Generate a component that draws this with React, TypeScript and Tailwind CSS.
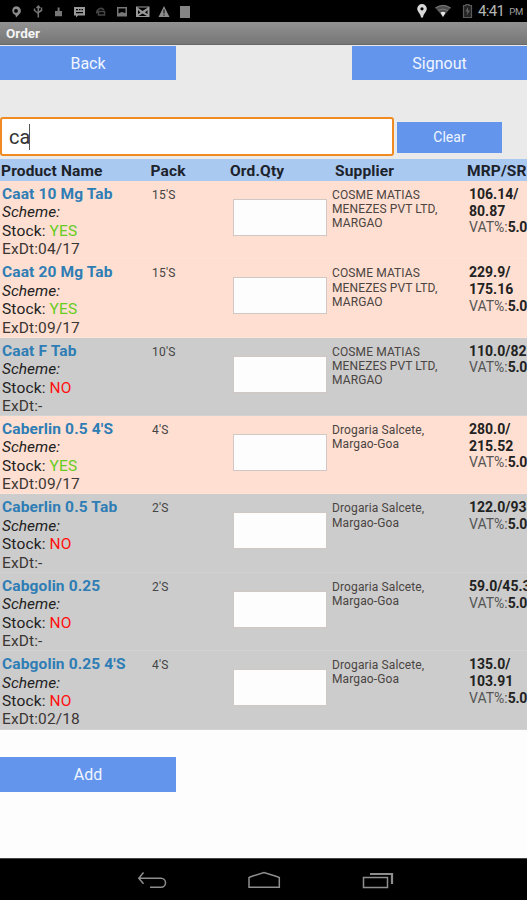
import React, { useState } from 'react';

interface Product {
  name: string;
  inStock: boolean;
  expiry: string;
  pack: string;
  supplier: string[];
  price: string[];
}

const COSME = ['COSME MATIAS', 'MENEZES PVT LTD,', 'MARGAO'];
const DROGARIA = ['Drogaria Salcete,', 'Margao-Goa'];

const products: Product[] = [
  { name: 'Caat 10 Mg Tab', inStock: true, expiry: '04/17', pack: "15'S", supplier: COSME, price: ['106.14/', '80.87'] },
  { name: 'Caat 20 Mg Tab', inStock: true, expiry: '09/17', pack: "15'S", supplier: COSME, price: ['229.9/', '175.16'] },
  { name: 'Caat F Tab', inStock: false, expiry: '-', pack: "10'S", supplier: COSME, price: ['110.0/82'] },
  { name: "Caberlin 0.5 4'S", inStock: true, expiry: '09/17', pack: "4'S", supplier: DROGARIA, price: ['280.0/', '215.52'] },
  { name: 'Caberlin 0.5 Tab', inStock: false, expiry: '-', pack: "2'S", supplier: DROGARIA, price: ['122.0/93'] },
  { name: 'Cabgolin 0.25', inStock: false, expiry: '-', pack: "2'S", supplier: DROGARIA, price: ['59.0/45.3'] },
  { name: "Cabgolin 0.25 4'S", inStock: false, expiry: '02/18', pack: "4'S", supplier: DROGARIA, price: ['135.0/', '103.91'] },
];

const StatusBar = () => (
  <div className="h-[22px] shrink-0 bg-black flex items-center justify-between">
    <svg width="200" height="22" viewBox="0 0 200 22" fill="#8c8c8c">
      {/* location */}
      <path fillRule="evenodd" d="M16 6.200a4.900 4.600 0 0 1 3 8.200L16 17.500l-.6-2.600a4.500 4.500 0 0 1 .6-8.700zm0 2.800a1.900 1.900 0 1 0 0 3.800 1.900 1.900 0 0 0 0-3.800z" />
      {/* usb */}
      <g fill="none" stroke="#777" strokeWidth="1.500">
        <path d="M38.300 6v11.500M34.500 8.500v2l3.800 3M41.500 7.500v3l-3.200 2" />
        <path d="M36.500 8l1.800-2 1.800 2" />
      </g>
      {/* debugging */}
      <path d="M57.600 7.500h2V11H62v5.300h-7V11h2.600z" fill="#777" />
      {/* message */}
      <path fillRule="evenodd" d="M74 7h11v8.500h-7l-2 2v-2h-2zM76 9v1.200h2V9zM79 9v1.200h1.500V9zM81.500 9v1.200H83V9zM76 12v1.200h7V12z" fill="#999" />
      <g fill="none" stroke="#454545" strokeWidth="1.500">
        <path d="M97 13.500a4 4 0 0 1 7-3.500M98.500 11.500h6v3.500h-6z" />
      </g>
      {/* picture */}
      <path fillRule="evenodd" d="M117 7h10v9.500h-10zM118.500 8.500v5l3-1.500 4 1V8.500z" fill="#777" />
      {/* mail */}
      <path fillRule="evenodd" d="M136 6.500h13.500v10.500H136zM137.500 7.500l5 3.500 5.500-3.500zM138 10v4l2.500-1.500zM147.500 10v4l-2.500-1.500zM138.500 16l4-2.500 4.500 2.500z" fill="#999" />
      {/* warning */}
      <path fillRule="evenodd" d="M164 6l5.500 11h-11zM163.500 9.500v4h1v-4zM163.500 14.500v1.200h1v-1.200z" />
      <rect x="180" y="6" width="10" height="12" fill="#858585" />
    </svg>
    <div className="w-[112px] flex items-center">
      <svg className="shrink-0" width="63" height="22" viewBox="415 0 63 22">
        <path fill="#d8d8d8" fillRule="evenodd" d="M422 4a4.800 4.800 0 0 1 4.800 4.800c0 3-3.300 4.700-3.800 8.700h-2c-.5-4-3.800-5.700-3.800-8.700A4.800 4.800 0 0 1 422 4zm0 3.200a1.600 1.600 0 1 0 0 3.200 1.600 1.600 0 0 0 0-3.200z" />
        <path fill="#4d4d4d" d="M435 7.500q8-5.500 16 0l-8 9.500z" />
        <path fill="none" stroke="#777" strokeWidth="1" d="M435.500 8q7.500-5 15 0M438 10.500q5-3 10 0" />
        <path fill="#e5e5e5" d="M440.500 12.500q2.500-1.500 5 0l-2.500 4.500z" />
        <path fill="#242424" stroke="#5a5a5a" strokeWidth="1.200" d="M463.500 5.500h2.500v-1h3v1h2.500V17.500h-8z" />
        <path fill="#656565" d="M468 7l-2.500 4.500h2l-1 4 3.500-5h-2z" />
      </svg>
      <span className="text-[15px] leading-[22px] tracking-[-0.7px] text-[#b5b5b5]">4:41</span>
      <span className="ml-[5px] pt-[3px] text-[9.500px] text-[#a0a0a0]">PM</span>
    </div>
  </div>
);

const NavBar = () => (
  <div className="mt-auto h-[42px] shrink-0 bg-black border-t border-[#444]">
    <svg width="527" height="41" viewBox="0 859 527 41" fill="none" stroke="#8e8e8e" strokeWidth="1.500">
      <path d="M143.500 872.500l-4.700 5.700 4.700 5.600M139 878.200h22a4.500 4.500 0 0 1 0 9h-11" />
      <path d="M249 887.300v-9.800l3-1.200 12-3.800 12 3.800 3.300 1.200v9.800z" />
      <path d="M363.500 877.500h24v10h-24z" />
      <path d="M370 874h22v10" strokeWidth="2.200" />
    </svg>
  </div>
);

interface ActionButtonProps {
  label: string;
  className: string;
}

const ActionButton: React.FC<ActionButtonProps> = ({ label, className }) => (
  <button className={`bg-[#6495ed] text-[#f0f5ff] flex items-center justify-center ${className}`}>{label}</button>
);

const ProductRow: React.FC<{ product: Product }> = ({ product }) => (
  <div className={`flex h-[78.360px] border-b border-white/15 text-[#222] ${product.inStock ? 'bg-[#ffdfd1]' : 'bg-[#cccccc]'}`}>
    <div className="w-[152px] shrink-0 pl-[2px] pt-[4px] text-[15.500px] leading-[18.400px] whitespace-nowrap">
      <div className="font-bold tracking-[0.13px] text-[#2e7db5]">{product.name}</div>
      <div className="italic">Scheme:</div>
      <div className="tracking-[0.15px]">
        Stock: <span className={product.inStock ? 'text-[#66cc22]' : 'text-[#ff1111]'}>{product.inStock ? 'YES' : 'NO'}</span>
      </div>
      <div className="tracking-[0.12px] text-[#3c3634]">ExDt:{product.expiry}</div>
    </div>
    <div className="w-[81px] shrink-0 pt-[7px] text-[12px] leading-[14px] tracking-[0.2px] text-[#444]">{product.pack}</div>
    <div className="w-[99px] shrink-0 pt-[18px]">
      <input className="block w-[94px] h-[37px] bg-[#fdfdfd] border border-[#d0c8c4] outline-none px-2" />
    </div>
    <div className="w-[137px] shrink-0 pt-[7px] text-[12px] leading-[14.200px] tracking-[0.12px] text-[#4a4442] whitespace-nowrap">
      {product.supplier.map((line) => (
        <div key={line}>{line}</div>
      ))}
    </div>
    <div className="shrink-0 pt-[5px] text-[14px] leading-[16.700px] whitespace-nowrap">
      {product.price.map((line) => (
        <div key={line} className="font-bold">{line}</div>
      ))}
      <div className="text-[#555]">
        VAT%:<span className="font-bold tracking-[-0.2px] text-[#222]">5.0</span>
      </div>
    </div>
  </div>
);

const App = () => {
  const [query] = useState('ca');

  return (
    <div className="w-[527px] h-[900px] flex flex-col overflow-hidden bg-[#fdfdfd] font-['Roboto',sans-serif]">
      <StatusBar />
      <div className="h-[23px] shrink-0 pl-[6px] bg-linear-to-b from-[#929292] to-[#767676] border-b border-[#696969] text-[13.500px] leading-[23px] font-bold text-[#f4f4f4]">
        Order
      </div>

      <div className="h-[114px] shrink-0 bg-[#eaeaea] pt-px flex flex-col justify-between">
        <div className="flex justify-between text-[16px]">
          <ActionButton label="Back" className="w-[176px] h-[34px] pt-px" />
          <ActionButton label="Signout" className="w-[175px] h-[34px] pt-px" />
        </div>
        <div className="flex items-start pb-[3px]">
          <div className="w-[394px] h-[39px] flex items-center rounded-[3px] border-2 border-[#ef8b22] bg-white pl-[7px] text-[20px] text-[#333]">
            {query}
            <span className="-ml-px w-px h-[26px] bg-[#555]" />
          </div>
          <ActionButton label="Clear" className="ml-[3px] mt-[5px] w-[105px] h-[31px] text-[14px]" />
        </div>
      </div>

      <div className="h-[22px] shrink-0 flex bg-[#a9c9f0] text-[15.500px] leading-[24px] tracking-[0.15px] font-bold text-[#1d222b] whitespace-nowrap">
        <div className="w-[150.500px] shrink-0 pl-px">Product Name</div>
        <div className="w-[79.500px] shrink-0">Pack</div>
        <div className="w-[105px] shrink-0">Ord.Qty</div>
        <div className="w-[132px] shrink-0">Supplier</div>
        <div className="shrink-0">MRP/SR</div>
      </div>
      {products.map((product) => (
        <ProductRow key={product.name} product={product} />
      ))}

      <ActionButton label="Add" className="mt-[27px] pt-px w-[176px] h-[35px] shrink-0 text-[16px]" />
      <NavBar />
    </div>
  );
};

export default App;
